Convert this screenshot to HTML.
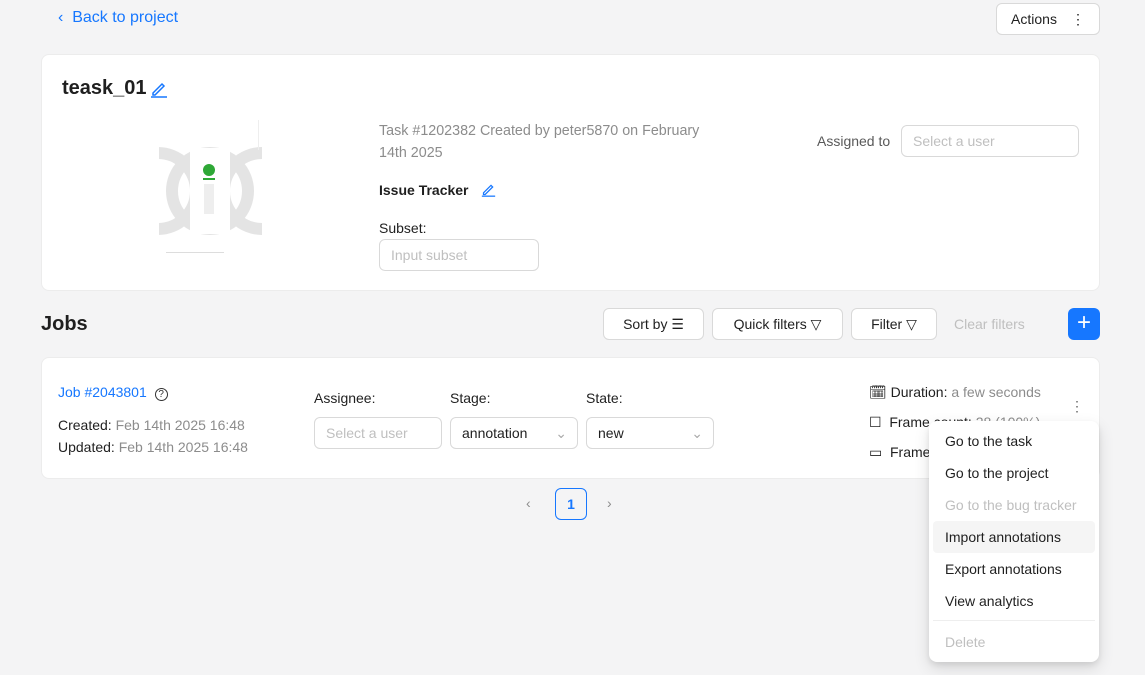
<!DOCTYPE html>
<html><head><style>
*{box-sizing:border-box;margin:0;padding:0}
body{width:1145px;height:675px;background:#f4f4f5;font-family:"Liberation Sans",sans-serif;font-size:14px;color:#1f1f1f;position:relative;overflow:hidden}
.a{position:absolute}
.card{position:absolute;background:#fff;border:1px solid #ececec;border-radius:8px}
.btn{position:absolute;background:#fff;border:1px solid #d9d9d9;border-radius:6px;height:32px;display:flex;align-items:center;justify-content:center;gap:6px;font-size:14px}
.inp{position:absolute;background:#fff;border:1px solid #d9d9d9;border-radius:6px;height:32px;padding-left:11px;display:flex;align-items:center;color:#bfbfbf}
.gray{color:#8c8c8c}
.blue{color:#1677ff}
.mi{position:absolute;left:16px;font-size:14px}
</style></head><body>
<div class="a blue" style="left:58px;top:9px;font-size:16px">‹&nbsp;&nbsp;Back to project</div>
<div class="btn" style="left:996px;top:3px;width:104px">Actions <span style="margin-left:8px">⋮</span></div>

<div class="card" style="left:41px;top:54px;width:1059px;height:237px"></div>
<div class="a" style="left:62px;top:77px;font-size:20px;font-weight:bold">teask_01</div>
<svg class="a" style="left:150px;top:80px" width="18" height="18" viewBox="0 0 18 18"><path d="M3 13 L12 4 L14 6 L5 15 L3 15 Z" fill="none" stroke="#1677ff" stroke-width="1.5"/><path d="M1 17 H17" stroke="#1677ff" stroke-width="1.5"/></svg>
<div class="a" style="left:158px;top:120px;width:104px;height:135px;background:#fff">
<svg width="104" height="135"><circle cx="52" cy="71" r="38" fill="none" stroke="#e4e4e4" stroke-width="12"/><circle cx="0" cy="71" r="38" fill="none" stroke="#e4e4e4" stroke-width="12"/><circle cx="104" cy="71" r="38" fill="none" stroke="#e4e4e4" stroke-width="12"/><rect x="0" y="0" width="1" height="135" fill="#fff"/><rect x="-10" y="20" width="11" height="40" fill="#fff"/><rect x="32" y="28" width="40" height="86" fill="#fff"/><circle cx="51" cy="50" r="6" fill="#2ea836"/><rect x="45" y="58" width="12" height="2" fill="#2ea836"/><rect x="46" y="64" width="10" height="30" fill="#eee"/><rect x="8" y="132" width="58" height="1" fill="#ddd"/><rect x="100" y="0" width="1" height="30" fill="#eee"/></svg></div>
<div class="a gray" style="left:379px;top:120px;line-height:22px;width:345px;font-size:14.3px">Task #1202382 Created by peter5870 on February<br>14th 2025</div>
<div class="a" style="left:379px;top:182px;font-weight:bold">Issue Tracker</div>
<svg class="a" style="left:481px;top:182px" width="15" height="15" viewBox="0 0 18 18"><path d="M3 13 L12 4 L14 6 L5 15 L3 15 Z" fill="none" stroke="#1677ff" stroke-width="1.5"/><path d="M1 17 H17" stroke="#1677ff" stroke-width="1.5"/></svg>
<div class="a" style="left:379px;top:220px">Subset:</div>
<div class="inp" style="left:379px;top:239px;width:160px">Input subset</div>
<div class="a gray" style="left:817px;top:133px;color:#595959">Assigned to</div>
<div class="inp" style="left:901px;top:125px;width:178px">Select a user</div>

<div class="a" style="left:41px;top:313px;font-size:20px;font-weight:bold">Jobs</div>
<div class="btn" style="left:603px;top:308px;width:101px">Sort by ☰</div>
<div class="btn" style="left:712px;top:308px;width:131px">Quick filters ▽</div>
<div class="btn" style="left:851px;top:308px;width:86px">Filter ▽</div>
<div class="a" style="left:954px;top:316px;color:#bfbfbf">Clear filters</div>
<div class="a" style="left:1068px;top:308px;width:32px;height:32px;background:#1677ff;border-radius:6px;color:#fff;font-size:24px;text-align:center;line-height:30px">+</div>

<div class="card" style="left:41px;top:357px;width:1059px;height:122px"></div>
<div class="a blue" style="left:58px;top:384px">Job #2043801 <span style="color:#333;border:1.3px solid #333;border-radius:50%;font-size:10px;display:inline-block;width:13px;height:13px;text-align:center;line-height:11px;margin-left:4px">?</span></div>
<div class="a" style="left:58px;top:414px;line-height:22px">Created: <span class="gray">Feb 14th 2025 16:48</span><br>Updated: <span class="gray">Feb 14th 2025 16:48</span></div>
<div class="a" style="left:314px;top:390px">Assignee:</div>
<div class="inp" style="left:314px;top:417px;width:128px">Select a user</div>
<div class="a" style="left:450px;top:390px">Stage:</div>
<div class="inp" style="left:450px;top:417px;width:128px;color:#1f1f1f">annotation<span class="a" style="right:10px;color:#aaa">⌄</span></div>
<div class="a" style="left:586px;top:390px">State:</div>
<div class="inp" style="left:586px;top:417px;width:128px;color:#1f1f1f">new<span class="a" style="right:10px;color:#aaa">⌄</span></div>
<div class="a" style="left:869px;top:384px">🗓&nbsp;Duration: <span class="gray">a few seconds</span></div>
<div class="a" style="left:869px;top:414px">☐&nbsp; Frame count: <span class="gray">28 (100%)</span></div>
<div class="a" style="left:869px;top:444px">▭&nbsp; Frame</div>
<div class="a" style="left:1070px;top:398px;color:#666">⋮</div>

<div class="a gray" style="left:526px;top:495px">‹</div>
<div class="a blue" style="left:555px;top:488px;width:32px;height:32px;border:1px solid #1677ff;border-radius:6px;text-align:center;line-height:30px;font-weight:bold">1</div>
<div class="a gray" style="left:607px;top:495px">›</div>

<div class="a" style="left:929px;top:421px;width:170px;height:241px;background:#fff;border-radius:8px;box-shadow:0 6px 16px rgba(0,0,0,.12),0 3px 6px rgba(0,0,0,.08)">
<div class="mi" style="top:12px">Go to the task</div>
<div class="mi" style="top:44px">Go to the project</div>
<div class="mi" style="top:76px;color:#bfbfbf">Go to the bug tracker</div>
<div class="a" style="left:4px;top:100px;width:162px;height:32px;background:#f5f5f5;border-radius:4px"></div>
<div class="mi" style="top:108px">Import annotations</div>
<div class="mi" style="top:140px">Export annotations</div>
<div class="mi" style="top:172px">View analytics</div>
<div class="a" style="left:4px;top:199px;width:162px;height:1px;background:#eee"></div>
<div class="mi" style="top:213px;color:#bfbfbf">Delete</div>
</div>
</body></html>
